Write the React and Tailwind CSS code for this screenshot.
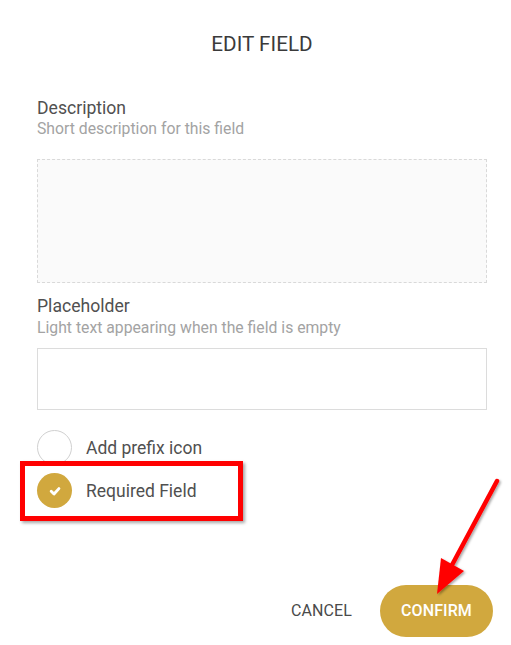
import React from "react";

function Check() {
  return (
    <svg width="14" height="14" viewBox="0 0 14 14">
      <path d="M3.2 7.3 L6 10 L10.9 4.6" fill="none" stroke="#fff" strokeWidth="2.9" strokeLinecap="round" strokeLinejoin="round" />
    </svg>
  );
}

export default function App() {
  return (
    <div className="relative w-[511px] h-[645px] bg-white overflow-hidden" style={{ fontFamily: "Roboto, 'Liberation Sans', sans-serif" }}>
      <div className="flex flex-col pl-[37px] pr-[24px]">
        <h1 className="pt-[32px] text-center text-[20.7px] leading-6 text-[#3a3a3a]">EDIT FIELD</h1>

        <div className="mt-[40px] text-[17.6px] leading-6 text-[#505050]">Description</div>
        <div className="-mt-px text-[15.75px] leading-5 text-[#a3a3a3]">Short description for this field</div>
        <div className="mt-[20px] h-[124px] border border-dashed border-[#d9d9d9] bg-[#fafafa]" />

        <div className="mt-[11px] text-[17.6px] leading-6 text-[#505050]">Placeholder</div>
        <div className="text-[15.75px] leading-5 text-[#a3a3a3]">Light text appearing when the field is empty</div>
        <div className="mt-[10px] h-[62px] border border-[#dcdcdc] bg-white" />

        <div className="mt-[20px] flex flex-col gap-[8px]">
          <div className="flex items-center gap-[14px]">
            <div className="w-[35px] h-[35px] rounded-full border border-[#d0d0d0] bg-white" />
            <span className="text-[17.5px] leading-6 text-[#505050]">Add prefix icon</span>
          </div>
          <div className="flex items-center gap-[14px]">
            <div className="w-[35px] h-[35px] rounded-full bg-[#d1a83e] flex items-center justify-center">
              <Check />
            </div>
            <span className="text-[17.5px] leading-6 text-[#505050]">Required Field</span>
          </div>
        </div>
      </div>

      <div className="absolute left-0 right-[18px] top-[585px] flex items-center justify-end gap-[28px]">
        <button className="text-[16px] leading-6 text-[#4a4a4a] tracking-[0.1px]">CANCEL</button>
        <button className="w-[113px] h-[52px] rounded-full bg-[#d1a83e] text-white text-[16px] font-medium tracking-[0.1px]">CONFIRM</button>
      </div>

      {/* annotation overlays */}
      <div className="absolute left-[20px] top-[461px] w-[223px] h-[60px] border-[5px] border-[#ff0000] shadow-[2px_2px_3px_rgba(0,0,0,0.35)]" />
      <svg className="absolute left-0 top-0" width="511" height="645" viewBox="0 0 511 645">
        <defs>
          <filter id="sh" x="-20%" y="-20%" width="140%" height="140%">
            <feDropShadow dx="1.5" dy="1.5" stdDeviation="1.2" floodColor="#000" floodOpacity="0.35" />
          </filter>
        </defs>
        <g filter="url(#sh)">
          <line x1="497" y1="481" x2="452" y2="565" stroke="#ff0000" strokeWidth="4.5" strokeLinecap="round" />
          <polygon points="437,594 441,558 464,571" fill="#ff0000" />
        </g>
      </svg>
    </div>
  );
}
